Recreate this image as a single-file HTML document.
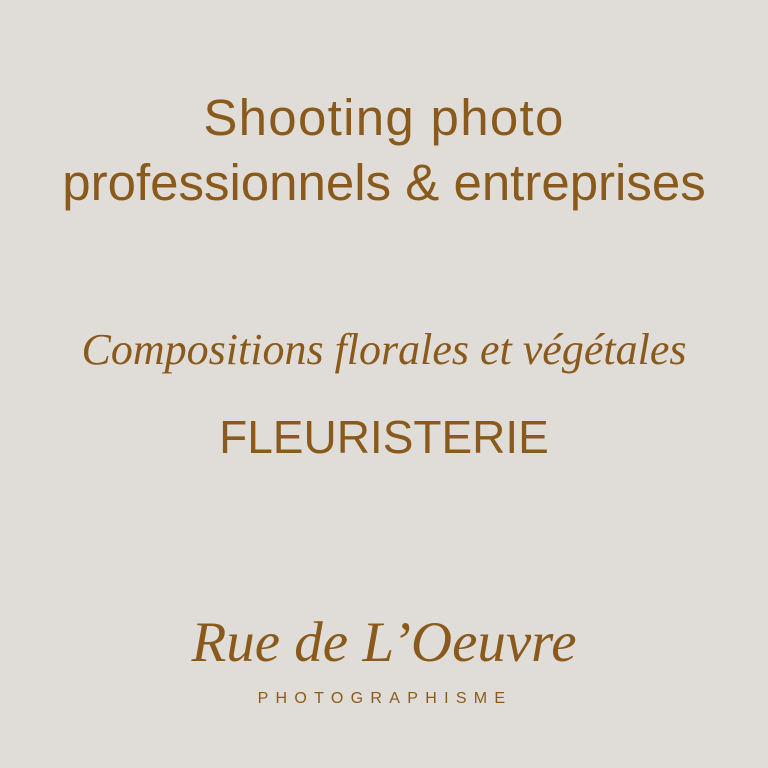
<!DOCTYPE html>
<html><head><meta charset="utf-8"><style>
html,body{margin:0;padding:0}
body{width:768px;height:768px;background:#e0ddd8;color:#8a5a1c;position:relative;overflow:hidden}
div{position:absolute;left:0;width:768px;text-align:center;white-space:nowrap}
.s{font-family:"Liberation Sans",sans-serif;font-size:51px;line-height:1}
.c{font-family:"Liberation Serif",serif;font-style:italic}
</style></head><body>
<div class="s" style="top:92px;letter-spacing:1.3px">Shooting photo</div>
<div class="s" style="top:157px">professionnels &amp; entreprises</div>
<div class="c" style="top:328px;font-size:44px;line-height:1">Compositions florales et végétales</div>
<div class="s" style="top:414px;font-size:46px">FLEURISTERIE</div>
<div class="c" style="top:614px;font-size:57px;line-height:1">Rue de L’Oeuvre</div>
<div style="top:691px;left:-6px;font-family:'Liberation Sans',sans-serif;font-size:16px;letter-spacing:7.3px;padding-left:7px;line-height:1">PHOTOGRAPHISME</div>
</body></html>
